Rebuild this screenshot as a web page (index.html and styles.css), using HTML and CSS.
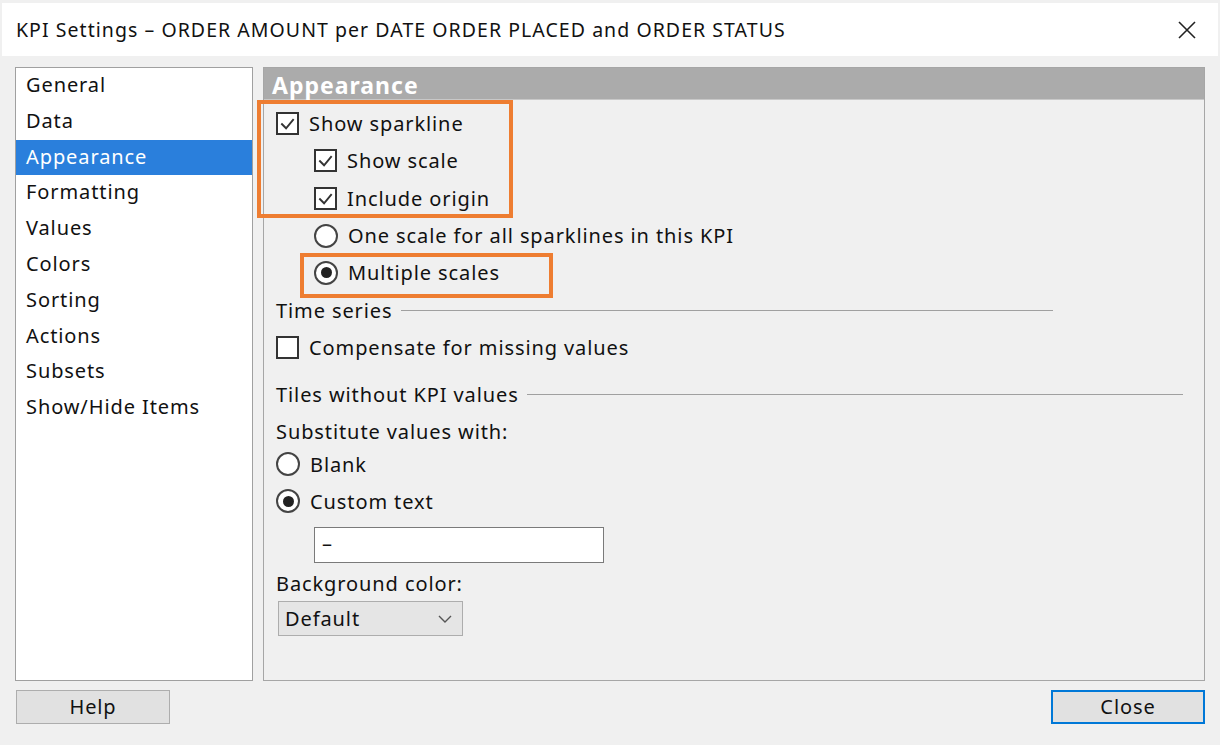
FILE: index.html
```html
<!DOCTYPE html>
<html>
<head>
<meta charset="utf-8">
<link rel="stylesheet" href="styles.css">
</head>
<body>
<div class="window">
  <div class="titlebar">
    <span class="title">KPI Settings – ORDER AMOUNT per DATE ORDER PLACED and ORDER STATUS</span>
    <svg class="close-x" width="20" height="20" viewBox="0 0 20 20"><path d="M2 2 L18 18 M18 2 L2 18" stroke="#222" stroke-width="1.6" fill="none"/></svg>
  </div>
  <div class="main">
    <ul class="nav">
      <li>General</li>
      <li>Data</li>
      <li class="sel">Appearance</li>
      <li>Formatting</li>
      <li>Values</li>
      <li>Colors</li>
      <li>Sorting</li>
      <li>Actions</li>
      <li>Subsets</li>
      <li>Show/Hide Items</li>
    </ul>
    <div class="panel">
      <div class="panel-head">Appearance</div>
      <div class="panel-body">
        <div class="row r1"><span class="cb on"><svg viewBox="0 0 20 20"><path d="M3.5 10 L8.5 15 L16.5 5.5" stroke="#333" stroke-width="2" fill="none"/></svg></span><span>Show sparkline</span></div>
        <div class="row ind"><span class="cb on"><svg viewBox="0 0 20 20"><path d="M3.5 10 L8.5 15 L16.5 5.5" stroke="#333" stroke-width="2" fill="none"/></svg></span><span>Show scale</span></div>
        <div class="row ind"><span class="cb on"><svg viewBox="0 0 20 20"><path d="M3.5 10 L8.5 15 L16.5 5.5" stroke="#333" stroke-width="2" fill="none"/></svg></span><span>Include origin</span></div>
        <div class="row ind"><span class="rb"></span><span>One scale for all sparklines in this KPI</span></div>
        <div class="row ind"><span class="rb on"></span><span>Multiple scales</span></div>
        <div class="row group ts"><span>Time series</span><span class="rule"></span></div>
        <div class="row"><span class="cb"></span><span>Compensate for missing values</span></div>
        <div class="row group g2"><span>Tiles without KPI values</span><span class="rule"></span></div>
        <div class="row lbl">Substitute values with:</div>
        <div class="row tight"><span class="rb"></span><span>Blank</span></div>
        <div class="row custom"><span class="rb on"></span><span>Custom text</span></div>
        <div class="input">–</div>
        <div class="row lbl2">Background color:</div>
        <div class="select"><span>Default</span><svg width="16" height="10" viewBox="0 0 16 10"><path d="M2 2 L8 8 L14 2" stroke="#555" stroke-width="1.4" fill="none"/></svg></div>
      </div>
      <div class="mark m1"></div>
      <div class="mark m2"></div>
    </div>
  </div>
  <div class="footer">
    <button class="btn">Help</button>
    <button class="btn primary">Close</button>
  </div>
</div>
</body>
</html>
```

FILE: styles.css
```css
* { box-sizing: border-box; }
html, body { margin: 0; padding: 0; }
body {
  background: #f0f0f0;
  font-family: "Noto Sans", "Liberation Sans", sans-serif;
  font-size: 20px;
  letter-spacing: 0.9px;
  color: #111;
  width: 1220px;
  height: 745px;
  overflow: hidden;
}
.window { padding: 3px 2px 0 2px; }
.titlebar {
  height: 53px;
  background: #fff;
  display: flex;
  align-items: center;
  justify-content: space-between;
  padding: 0 21px 0 14px;
}
.title { font-size: 19.5px; color: #111; letter-spacing: 1.05px; }
.close-x { display: block; }
.main {
  display: flex;
  gap: 10px;
  margin-top: 11px;
  padding: 0 13px;
  height: 614px;
}
.nav {
  list-style: none;
  margin: 0;
  padding: 0;
  width: 238px;
  background: #fff;
  border: 1px solid #a0a0a0;
}
.nav li {
  height: 35.8px;
  line-height: 34px;
  padding-left: 10px;
  white-space: nowrap;
}
.nav li.sel { background: #2a7fdc; color: #fff; }
.panel {
  position: relative;
  flex: 1;
  border: 1px solid #a6a6a6;
}
.panel-head {
  height: 32px;
  background: #ababab;
  color: #fff;
  font-weight: bold;
  font-size: 23px;
  letter-spacing: 1px;
  line-height: 34px;
  padding-left: 8px;
  border-bottom: 1px solid #c8c8c8;
}
.panel-body {
  padding: 5px 0 0 12px;
  display: flex;
  flex-direction: column;
}
.row {
  display: flex;
  align-items: center;
  height: 37.3px;
  gap: 10px;
  white-space: nowrap;
}
.row.ind { padding-left: 38px; }
.cb {
  width: 23px;
  height: 23px;
  border: 2px solid #333;
  background: #fff;
  display: inline-flex;
  align-items: center;
  justify-content: center;
  flex: none;
}
.cb svg { width: 19px; height: 19px; display: block; }
.rb {
  width: 24px;
  height: 24px;
  border-radius: 50%;
  border: 2px solid #444;
  background: #fff;
  flex: none;
  display: inline-flex;
  align-items: center;
  justify-content: center;
}
.rb.on::after {
  content: "";
  width: 11px;
  height: 11px;
  border-radius: 50%;
  background: #222;
}
.group { gap: 8px; }
.rule { height: 1px; background: #a0a0a0; display: block; flex: 1; }
.ts { width: 777px; }
.g2 { margin-top: 10px; width: 907px; }
.lbl { height: 36px; }
.tight { height: 30px; }
.custom { height: 44px; }
.input {
  margin: 4px 0 0 38px;
  width: 290px;
  height: 36px;
  background: #fff;
  border: 1px solid #7a7a7a;
  padding-left: 7px;
  line-height: 31px;
}
.lbl2 { height: 36px; margin-top: 2px; }
.select {
  margin-left: 2px;
  width: 185px;
  height: 35px;
  background: #e5e5e5;
  border: 1px solid #adadad;
  display: flex;
  align-items: center;
  justify-content: space-between;
  padding: 0 9px 0 6px;
}
.mark {
  position: absolute;
  border: 4px solid #ee7d31;
}
.m1 { left: -7px; top: 32px; width: 256px; height: 118px; }
.m2 { left: 36px; top: 185px; width: 253px; height: 45px; }
.footer {
  display: flex;
  justify-content: space-between;
  padding: 9px 13px 0 14px;
}
.btn {
  width: 154px;
  height: 34px;
  background: #e1e1e1;
  border: 1px solid #adadad;
  font-family: inherit;
  font-size: 20px;
  letter-spacing: 0.9px;
  color: #111;
  padding: 0 0 2px 0;
}
.btn.primary { border: 2px solid #0078d7; }
```
